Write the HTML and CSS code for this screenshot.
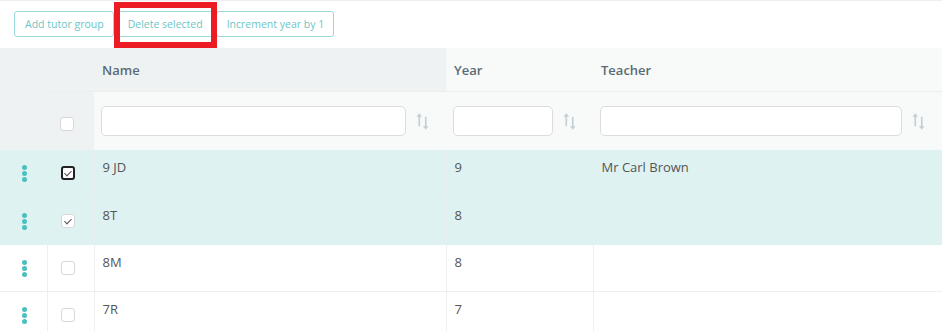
FILE: index.html
```html
<!DOCTYPE html>
<html lang="en">
<head>
    <meta charset="UTF-8">
    <title>Tutor groups</title>
    <link rel="stylesheet" href="styles.css">
</head>
<body>
    <div class="toolbar">
        <button class="btn">Add tutor group</button>
        <button class="btn btn-marked">Delete selected</button>
        <button class="btn">Increment year by 1</button>
    </div>

    <table class="grid">
        <colgroup>
            <col class="c-menu">
            <col class="c-check">
            <col class="c-name">
            <col class="c-year">
            <col class="c-teacher">
        </colgroup>
        <thead>
            <tr class="head-row">
                <th class="dark"></th>
                <th class="dark"></th>
                <th class="dark">Name</th>
                <th>Year</th>
                <th>Teacher</th>
            </tr>
            <tr class="filter-row">
                <th class="dark"></th>
                <th class="dark"><span class="check"></span></th>
                <th><div class="filter"><input type="text"><svg class="sort" width="13" height="19" viewBox="0 0 14 20"><path d="M3.5 15V4M10.5 5v11" stroke="#c3cfd4" stroke-width="1.8"/><path d="M0.5 5L3.5 1 6.5 5ZM7.5 15L10.5 19 13.5 15Z" fill="#c3cfd4"/></svg></div></th>
                <th><div class="filter"><input type="text"><svg class="sort" width="13" height="19" viewBox="0 0 14 20"><path d="M3.5 15V4M10.5 5v11" stroke="#c3cfd4" stroke-width="1.8"/><path d="M0.5 5L3.5 1 6.5 5ZM7.5 15L10.5 19 13.5 15Z" fill="#c3cfd4"/></svg></div></th>
                <th><div class="filter"><input type="text"><svg class="sort" width="13" height="19" viewBox="0 0 14 20"><path d="M3.5 15V4M10.5 5v11" stroke="#c3cfd4" stroke-width="1.8"/><path d="M0.5 5L3.5 1 6.5 5ZM7.5 15L10.5 19 13.5 15Z" fill="#c3cfd4"/></svg></div></th>
            </tr>
        </thead>
        <tbody>
            <tr class="selected">
                <td><span class="dots"><i></i><i></i><i></i></span></td>
                <td><span class="check checked focused"></span></td>
                <td>9 JD</td>
                <td>9</td>
                <td>Mr Carl Brown</td>
            </tr>
            <tr class="selected">
                <td><span class="dots"><i></i><i></i><i></i></span></td>
                <td><span class="check checked"></span></td>
                <td>8T</td>
                <td>8</td>
                <td></td>
            </tr>
            <tr>
                <td><span class="dots"><i></i><i></i><i></i></span></td>
                <td><span class="check"></span></td>
                <td>8M</td>
                <td>8</td>
                <td></td>
            </tr>
            <tr>
                <td><span class="dots"><i></i><i></i><i></i></span></td>
                <td><span class="check"></span></td>
                <td>7R</td>
                <td>7</td>
                <td></td>
            </tr>
        </tbody>
    </table>
</body>
</html>
```

FILE: styles.css
```css
body {
    margin: 0;
    font-family: 'Open Sans', sans-serif;
    font-size: 13px;
    color: #555;
    background-color: #fff;
}
.toolbar {
    display: flex;
    gap: 3px;
    padding: 10px 14px 11px;
    border-top: 1px solid #eee;
}
.btn {
    height: 26px;
    padding: 0 9px 0 10px;
    font-family: 'Open Sans', sans-serif;
    font-size: 10.5px;
    color: #6cc6c6;
    background-color: #fff;
    border: 1px solid #9ad9d9;
    border-radius: 3px;
}
.btn-marked {
    position: relative;
}
/* red highlight frame drawn over the button */
.btn-marked::after {
    content: '';
    position: absolute;
    left: -4px;
    top: -10px;
    width: 91px;
    height: 34px;
    border: 6px solid #ec1c24;
}
.grid {
    width: 942px;
    border-collapse: collapse;
    table-layout: fixed;
}
.c-menu { width: 47px; }
.c-check { width: 47px; }
.c-name { width: 352px; }
.c-year { width: 147px; }
.c-teacher { width: 349px; }
th, td {
    padding: 0 8px;
    text-align: left;
    vertical-align: top;
    border-left: 1px solid #eef0f0;
}
th:first-child, td:first-child {
    border-left: none;
}
.head-row th {
    height: 43px;
    vertical-align: middle;
    font-weight: 600;
    color: #5b6b75;
    background-color: #f8f9f9;
    border-left: none;
    border-bottom: 1px solid #ebeeef;
}
.head-row th:first-child {
    border-bottom: none;
}
.filter-row th {
    height: 58px;
    padding: 0 8px 0 7px;
    vertical-align: middle;
    background-color: #f8f9f9;
    border-left: none;
}
.grid th.dark {
    background-color: #eff2f3;
}
.filter-row th:nth-child(2) {
    height: 52px;
    padding: 6px 0 0 13px;
}
.filter {
    display: flex;
    align-items: center;
    gap: 10px;
}
.filter input {
    flex: 1;
    min-width: 0;
    height: 30px;
    box-sizing: border-box;
    border: 1px solid #dcdcdc;
    border-radius: 5px;
    background-color: #fff;
}
.filter .sort {
    flex: none;
    margin-right: 9px;
}
td {
    height: 47px;
    padding-top: 8px;
    padding-bottom: 0;
    border-bottom: 1px solid #eef0f0;
    box-sizing: border-box;
}
tr.selected td {
    background-color: #dff2f2;
    border-bottom-color: #dff2f2;
    border-left-color: #e6f0f0;
}
td:first-child {
    padding: 15px 0 0 22px;
}
td:nth-child(2) {
    padding: 16px 0 0 13px;
}
.dots {
    display: flex;
    flex-direction: column;
    gap: 1px;
}
.dots i {
    width: 5px;
    height: 5px;
    border-radius: 50%;
    background-color: #4dbfbf;
}
.check {
    display: block;
    width: 14px;
    height: 14px;
    box-sizing: border-box;
    border: 1px solid #d8d8d8;
    border-radius: 3px;
    background-color: #fff;
    position: relative;
}
.check.checked::after {
    content: '';
    position: absolute;
    left: 4px;
    top: 2px;
    width: 3px;
    height: 6px;
    border: solid #555;
    border-width: 0 1.3px 1.3px 0;
    transform: rotate(45deg);
}
.check.focused {
    border: 2px solid #222;
}
.check.focused::after {
    left: 3px;
    top: 1px;
}
```
